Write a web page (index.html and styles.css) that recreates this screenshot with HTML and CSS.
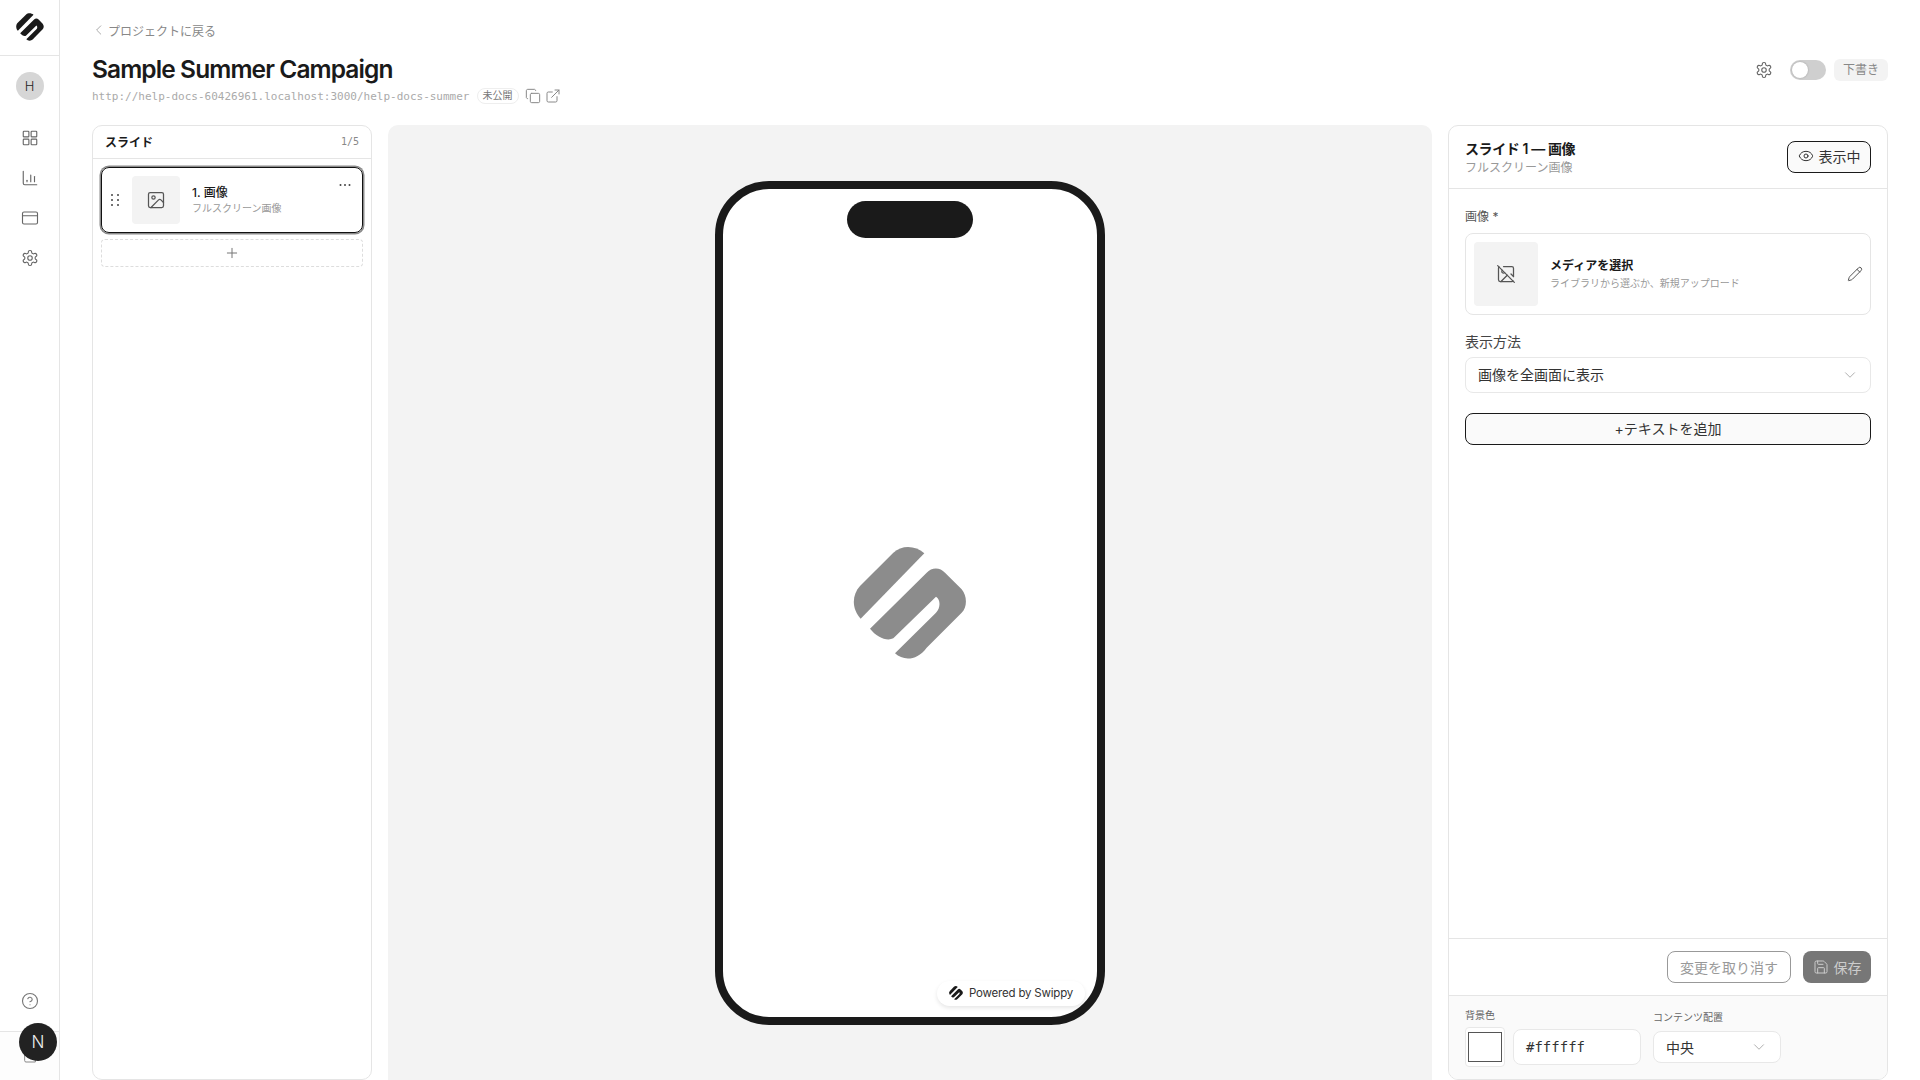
FILE: index.html
```html
<!DOCTYPE html>
<html lang="ja">
<head>
<meta charset="utf-8">
<title>Sample Summer Campaign</title>
<link rel="stylesheet" href="styles.css">
</head>
<body>
<svg class="sprite" aria-hidden="true">
  <symbol id="logo" viewBox="70 45 340 342"><path d="M283 67C255 42 215 42 190 65L90 165C65 192 65 235 92 263Z"/><path d="M120 293L290 125C305 108 330 108 345 125L395 175C412 195 412 228 395 245L290 350C260 390 220 390 195 367L318 245C332 232 332 205 318 197L190 322C170 332 140 318 120 293Z"/></symbol>
  <symbol id="grid" viewBox="0 0 24 24"><rect x="3" y="3" width="7.5" height="7.5" rx="1"/><rect x="13.5" y="3" width="7.5" height="7.5" rx="1"/><rect x="13.5" y="13.5" width="7.5" height="7.5" rx="1"/><rect x="3" y="13.5" width="7.5" height="7.5" rx="1"/></symbol>
  <symbol id="chart" viewBox="0 0 24 24"><path d="M3 3v16a2 2 0 0 0 2 2h16"/><path d="M8 17v-2"/><path d="M13 17V8"/><path d="M18 17v-7"/></symbol>
  <symbol id="card" viewBox="0 0 24 24"><rect x="2" y="4" width="20" height="16" rx="2"/><path d="M2 9h20"/></symbol>
  <symbol id="gear" viewBox="0 0 24 24"><path d="M12.22 2h-.44a2 2 0 0 0-2 2v.18a2 2 0 0 1-1 1.73l-.43.25a2 2 0 0 1-2 0l-.15-.08a2 2 0 0 0-2.73.73l-.22.38a2 2 0 0 0 .73 2.73l.15.1a2 2 0 0 1 1 1.72v.51a2 2 0 0 1-1 1.74l-.15.09a2 2 0 0 0-.73 2.73l.22.38a2 2 0 0 0 2.73.73l.15-.08a2 2 0 0 1 2 0l.43.25a2 2 0 0 1 1 1.73V20a2 2 0 0 0 2 2h.44a2 2 0 0 0 2-2v-.18a2 2 0 0 1 1-1.73l.43-.25a2 2 0 0 1 2 0l.15.08a2 2 0 0 0 2.73-.73l.22-.39a2 2 0 0 0-.73-2.73l-.15-.08a2 2 0 0 1-1-1.74v-.5a2 2 0 0 1 1-1.74l.15-.09a2 2 0 0 0 .73-2.73l-.22-.38a2 2 0 0 0-2.73-.73l-.15.08a2 2 0 0 1-2 0l-.43-.25a2 2 0 0 1-1-1.73V4a2 2 0 0 0-2-2z"/><circle cx="12" cy="12" r="3"/></symbol>
  <symbol id="help" viewBox="0 0 24 24"><circle cx="12" cy="12" r="10"/><path d="M9.09 9a3 3 0 0 1 5.83 1c0 2-3 3-3 3"/><path d="M12 17h.01"/></symbol>
  <symbol id="image" viewBox="0 0 24 24"><rect x="3" y="3" width="18" height="18" rx="2"/><circle cx="9" cy="9" r="2"/><path d="m21 15-3.086-3.086a2 2 0 0 0-2.828 0L6 21"/></symbol>
  <symbol id="image-off" viewBox="0 0 24 24"><path d="M2 2l20 20"/><path d="M10.41 10.41a2 2 0 1 1-2.83-2.83"/><path d="M13.5 13.5L6 21"/><path d="M18 12l3 3"/><path d="M3.59 3.59A1.99 1.99 0 0 0 3 5v14a2 2 0 0 0 2 2h14c.55 0 1.052-.22 1.41-.59"/><path d="M21 15V5a2 2 0 0 0-2-2H9"/></symbol>
  <symbol id="pencil" viewBox="0 0 24 24"><path d="M21.174 6.812a1 1 0 0 0-3.986-3.987L3.842 16.174a2 2 0 0 0-.5.83l-1.321 4.352a.5.5 0 0 0 .623.622l4.353-1.32a2 2 0 0 0 .83-.497z"/><path d="m15 5 4 4"/></symbol>
  <symbol id="eye" viewBox="0 0 24 24"><path d="M2.062 12.348a1 1 0 0 1 0-.696 10.75 10.75 0 0 1 19.876 0 1 1 0 0 1 0 .696 10.75 10.75 0 0 1-19.876 0"/><circle cx="12" cy="12" r="3"/></symbol>
  <symbol id="save" viewBox="0 0 24 24"><path d="M15.2 3a2 2 0 0 1 1.4.6l3.8 3.8a2 2 0 0 1 .6 1.4V19a2 2 0 0 1-2 2H5a2 2 0 0 1-2-2V5a2 2 0 0 1 2-2z"/><path d="M17 21v-7a1 1 0 0 0-1-1H8a1 1 0 0 0-1 1v7"/><path d="M7 3v4a1 1 0 0 0 1 1h7"/></symbol>
  <symbol id="copy" viewBox="0 0 24 24"><rect x="8" y="8" width="14" height="14" rx="2"/><path d="M4 16c-1.1 0-2-.9-2-2V4c0-1.1.9-2 2-2h10c1.1 0 2 .9 2 2"/></symbol>
  <symbol id="external" viewBox="0 0 24 24"><path d="M15 3h6v6"/><path d="M10 14 21 3"/><path d="M18 13v6a2 2 0 0 1-2 2H5a2 2 0 0 1-2-2V8a2 2 0 0 1 2-2h6"/></symbol>
  <symbol id="chev-left" viewBox="2.3 3.3 17.4 17.4"><path d="m15 18-6-6 6-6"/></symbol>
  <symbol id="chev-down" viewBox="0 0 24 24"><path d="m6 9 6 6 6-6"/></symbol>
  <symbol id="plus" viewBox="0 0 24 24"><path d="M5 12h14"/><path d="M12 5v14"/></symbol>
  <symbol id="logout" viewBox="0 0 24 24"><path d="M4 3v16a2 2 0 0 0 2 2h14v-8"/></symbol>
</svg>

<aside class="sidebar">
  <div class="side-logo"><svg class="logo-28"><use href="#logo"/></svg></div>
  <div class="side-nav">
    <div class="avatar">H</div>
    <nav class="nav-list">
      <span class="nav-item"><svg class="ic ic-18"><use href="#grid"/></svg></span>
      <span class="nav-item"><svg class="ic ic-18"><use href="#chart"/></svg></span>
      <span class="nav-item"><svg class="ic ic-18"><use href="#card"/></svg></span>
      <span class="nav-item"><svg class="ic ic-18"><use href="#gear"/></svg></span>
    </nav>
  </div>
  <div class="side-help"><svg class="ic ic-18"><use href="#help"/></svg></div>
  <div class="side-foot"><svg class="ic ic-16 foot-ic"><use href="#logout"/></svg></div>
</aside>

<main class="main">
  <header class="page-head">
    <div class="head-left">
      <a class="back"><svg class="ic ic-12 back-ic"><use href="#chev-left"/></svg><span>プロジェクトに戻る</span></a>
      <h1 class="title">Sample Summer Campaign</h1>
      <div class="url-row">
        <span class="url">http://help-docs-60426961.localhost:3000/help-docs-summer</span>
        <span class="pub-badge">未公開</span>
        <svg class="ic ic-16 url-ic"><use href="#copy"/></svg>
        <svg class="ic ic-16 url-ic url-ext"><use href="#external"/></svg>
      </div>
    </div>
    <div class="head-right">
      <svg class="ic ic-18 head-gear"><use href="#gear"/></svg>
      <span class="toggle"><span class="knob"></span></span>
      <span class="draft">下書き</span>
    </div>
  </header>

  <div class="columns">
    <section class="panel slides">
      <div class="slides-head"><strong>スライド</strong><span class="count">1/5</span></div>
      <div class="slides-list">
        <article class="slide-card">
          <svg class="grip" viewBox="0 0 16 16"><circle cx="5" cy="3" r="1"/><circle cx="11" cy="3" r="1"/><circle cx="5" cy="8" r="1"/><circle cx="11" cy="8" r="1"/><circle cx="5" cy="13" r="1"/><circle cx="11" cy="13" r="1"/></svg>
          <div class="slide-thumb"><svg class="ic ic-20 thumb-ic"><use href="#image"/></svg></div>
          <div class="slide-text"><div class="slide-name">1. 画像</div><div class="slide-sub">フルスクリーン画像</div></div>
          <svg class="more" viewBox="0 0 16 16"><circle cx="3.5" cy="8" r="1"/><circle cx="8" cy="8" r="1"/><circle cx="12.5" cy="8" r="1"/></svg>
        </article>
        <div class="add-slide"><svg class="ic ic-16"><use href="#plus"/></svg></div>
      </div>
    </section>

    <section class="preview">
      <div class="phone">
        <div class="notch"></div>
        <svg class="phone-logo"><use href="#logo"/></svg>
        <div class="powered"><svg class="logo-14"><use href="#logo"/></svg><span>Powered by Swippy</span></div>
      </div>
    </section>

    <section class="panel editor">
      <div class="ed-head">
        <div><div class="ed-title">スライド 1 — 画像</div><div class="ed-sub">フルスクリーン画像</div></div>
        <button class="btn-outline btn-view"><svg class="ic ic-16"><use href="#eye"/></svg><span>表示中</span></button>
      </div>
      <div class="ed-body">
        <div class="label-img">画像 *</div>
        <div class="media">
          <div class="media-thumb"><svg class="ic ic-20"><use href="#image-off"/></svg></div>
          <div class="media-text"><div class="media-title">メディアを選択</div><div class="media-sub">ライブラリから選ぶか、新規アップロード</div></div>
          <svg class="ic ic-16 media-edit"><use href="#pencil"/></svg>
        </div>
        <div class="label-mode">表示方法</div>
        <div class="select select-wide"><span class="select-text">画像を全画面に表示</span><svg class="ic ic-18 chev"><use href="#chev-down"/></svg></div>
        <button class="btn-outline btn-add">+テキストを追加</button>
      </div>
      <div class="ed-actions">
        <button class="btn-revert">変更を取り消す</button>
        <button class="btn-save"><svg class="ic ic-16"><use href="#save"/></svg><span>保存</span></button>
      </div>
      <div class="ed-bottom">
        <div class="field">
          <div class="mini-label">背景色</div>
          <div class="color-row">
            <div class="swatch"><span class="swatch-fill"></span></div>
            <div class="hex">#ffffff</div>
          </div>
        </div>
        <div class="field field-align">
          <div class="mini-label">コンテンツ配置</div>
          <div class="select select-small"><span>中央</span><svg class="ic ic-18 chev"><use href="#chev-down"/></svg></div>
        </div>
      </div>
    </section>
  </div>
</main>

<div class="dev-badge">N</div>
</body>
</html>
```

FILE: styles.css
```css
* { box-sizing: border-box; }
html, body { margin: 0; height: 100%; }
body {
  display: flex;
  height: 100vh;
  overflow: hidden;
  background: #fff;
  color: #1a1a1a;
  font-family: Inter, "Noto Sans CJK JP", sans-serif;
}
.sprite { display: none; }
button { font-family: inherit; cursor: pointer; }

.ic { fill: none; stroke: currentColor; stroke-width: 1.5; stroke-linecap: round; stroke-linejoin: round; flex: none; display: block; }
.ic-12 { width: 12px; height: 12px; }
.ic-16 { width: 16px; height: 16px; }
.ic-18 { width: 18px; height: 18px; }
.ic-20 { width: 20px; height: 20px; }

/* Sidebar */
.sidebar { width: 60px; flex: none; display: flex; flex-direction: column; border-right: 1px solid #e5e5e5; }
.side-logo { height: 56px; flex: none; display: flex; align-items: center; justify-content: center; border-bottom: 1px solid #e5e5e5; padding-bottom: 1px; }
.logo-28 { width: 28px; height: 28px; fill: #1a1a1a; }
.side-nav { padding-top: 16px; display: flex; flex-direction: column; align-items: center; }
.avatar { width: 28px; height: 28px; border-radius: 50%; background: #d6d6d6; display: flex; align-items: center; justify-content: center; font-size: 13px; font-weight: 300; color: #222; }
.nav-list { margin-top: 18px; display: flex; flex-direction: column; width: 100%; }
.nav-item { height: 40px; display: flex; align-items: center; justify-content: center; color: #666; }
.side-help { margin-top: auto; height: 60px; display: flex; align-items: center; justify-content: center; color: #777; }
.side-foot { height: 49px; flex: none; border-top: 1px solid #e5e5e5; background: #fdfdfd; display: flex; align-items: flex-end; justify-content: center; padding-bottom: 16px; }
.foot-ic { color: #888; }

/* Page */
.main { flex: 1; min-width: 0; padding: 0 32px; display: flex; flex-direction: column; }
.page-head { height: 125px; flex: none; display: flex; justify-content: space-between; align-items: flex-start; }
.head-left { padding-top: 20px; }
.back { display: flex; align-items: center; gap: 4px; height: 20px; font-size: 12px; color: #888; }
.back-ic { stroke-width: 1.2; color: #999; }
.title { margin: 11px 0 0; font-size: 24.5px; line-height: 36px; font-weight: 600; letter-spacing: -0.9px; color: #1a1a1a; white-space: nowrap; }
.url-row { display: flex; align-items: center; height: 18px; }
.url { font-family: "DejaVu Sans Mono", monospace; font-size: 11px; color: #aaa; }
.pub-badge { margin-left: 7px; height: 16px; padding: 0 5px; border: 1px solid #eee; border-radius: 8px; font-size: 10px; line-height: 13px; color: #777; }
.url-ic { color: #888; margin-left: 6px; }
.url-ext { margin-left: 4px; }
.head-right { margin-top: 59px; display: flex; align-items: center; height: 22px; color: #666; }
.head-gear { margin-right: 17px; }
.toggle { width: 36px; height: 20px; border-radius: 10px; background: #cfcfcf; display: flex; align-items: center; padding: 2px; margin-right: 8px; }
.knob { width: 16px; height: 16px; border-radius: 50%; background: #fff; box-shadow: 0 0 2px rgba(0,0,0,.25); }
.draft { width: 54px; height: 22px; border-radius: 6px; background: #f3f3f3; font-size: 12px; line-height: 21px; text-align: center; color: #888; }

.columns { flex: 1; min-height: 0; display: flex; gap: 16px; }
.panel { border: 1px solid #e5e5e5; border-radius: 10px; background: #fff; display: flex; flex-direction: column; overflow: hidden; }

/* Slide list */
.slides { width: 280px; flex: none; }
.slides-head { height: 33px; flex: none; padding: 0 12px 2px; border-bottom: 1px solid #e5e5e5; display: flex; align-items: center; justify-content: space-between; }
.slides-head strong { font-size: 12px; font-weight: 600; }
.count { font-family: "DejaVu Sans Mono", monospace; font-size: 10px; color: #888; }
.slides-list { padding: 8px; display: flex; flex-direction: column; gap: 6px; }
.slide-card { position: relative; height: 66px; border: 1px solid #111; border-radius: 8px; box-shadow: 0 0 0 1.5px #8a8a8a; padding: 8px 0 8px 5px; display: flex; align-items: center; }
.grip { width: 16px; height: 16px; fill: #444; flex: none; margin-right: 9px; }
.slide-thumb { width: 48px; height: 48px; border-radius: 4px; background: #f3f3f3; display: flex; align-items: center; justify-content: center; flex: none; margin-right: 12px; }
.thumb-ic { color: #555; }
.slide-name { font-size: 12px; line-height: 16px; font-weight: 500; color: #1a1a1a; }
.slide-sub { font-size: 10px; line-height: 14px; color: #999; }
.more { position: absolute; top: 9px; right: 9px; width: 16px; height: 16px; fill: #444; }
.add-slide { height: 28px; border: 1px dashed #ddd; border-radius: 4px; display: flex; align-items: center; justify-content: center; color: #777; }

/* Preview */
.preview { flex: 1; min-width: 0; border-radius: 10px 10px 0 0; background: #f3f3f3; display: flex; align-items: center; justify-content: center; }
.phone { position: relative; width: 390px; height: 844px; border: 8px solid #1a1a1a; border-radius: 54px; background: #fff; display: flex; align-items: center; justify-content: center; }
.notch { position: absolute; top: 12px; left: 50%; width: 126px; height: 37px; margin-left: -63px; border-radius: 19px; background: #1a1a1a; }
.phone-logo { width: 114px; height: 114px; fill: #8c8c8c; }
.powered { position: absolute; right: 12px; bottom: 11px; height: 25px; width: 148px; border-radius: 13px; background: #fff; box-shadow: 0 2px 4px rgba(0,0,0,.1); display: flex; align-items: center; gap: 6px; padding-left: 12px; font-size: 11.5px; letter-spacing: -0.2px; color: #333; white-space: nowrap; }
.logo-14 { width: 14px; height: 14px; fill: #1a1a1a; flex: none; }

/* Editor */
.editor { width: 440px; flex: none; }
.ed-head { height: 63px; flex: none; padding: 0 16px; border-bottom: 1px solid #e5e5e5; display: flex; align-items: center; justify-content: space-between; }
.ed-title { font-size: 14px; line-height: 20px; font-weight: 600; color: #1a1a1a; letter-spacing: -0.4px; }
.ed-sub { font-size: 12px; line-height: 16px; color: #999; margin-top: 1px; }
.btn-outline { border: 1px solid #1a1a1a; border-radius: 8px; background: #fafafa; height: 32px; font-size: 14px; color: #333; }
.btn-view { width: 84px; display: flex; align-items: center; justify-content: center; gap: 5px; padding: 0 0 2px; }
.ed-body { flex: 1; min-height: 0; padding: 20px 16px 0; }
.label-img { font-size: 12px; line-height: 16px; color: #555; }
.media { margin-top: 8px; height: 82px; border: 1px solid #e5e5e5; border-radius: 8px; padding: 8px; display: flex; align-items: center; }
.media-thumb { width: 64px; height: 64px; border-radius: 4px; background: #f3f3f3; display: flex; align-items: center; justify-content: center; flex: none; color: #555; }
.media-text { flex: 1; margin-left: 12px; }
.media-title { font-size: 12px; line-height: 16px; font-weight: 600; color: #1a1a1a; }
.media-sub { font-size: 10px; line-height: 14px; color: #999; margin-top: 2px; }
.media-edit { color: #555; margin-right: -1px; }
.label-mode { margin-top: 17px; font-size: 14px; line-height: 20px; color: #444; }
.select { border: 1px solid #e8e8e8; border-radius: 8px; display: flex; align-items: center; justify-content: space-between; font-size: 14px; color: #333; background: #fff; }
.select-wide { margin-top: 5px; height: 36px; padding: 0 11px 0 12px; }
.select-text { margin-top: -2px; }
.chev { color: #aaa; stroke-width: 1.25; }
.btn-add { margin-top: 20px; width: 100%; display: block; padding: 0 0 2px; }

.ed-actions { height: 57px; flex: none; border-top: 1px solid #e5e5e5; padding: 12px 16px 0; display: flex; justify-content: flex-end; gap: 12px; align-items: flex-start; }
.btn-revert { width: 124px; height: 32px; padding: 0 0 1px; border: 1px solid #999; border-radius: 8px; background: #fff; font-size: 14px; color: #999; }
.btn-save { width: 68px; height: 32px; padding: 0; border: none; border-radius: 8px; background: #777; color: #ccc; font-size: 14px; display: flex; align-items: center; justify-content: center; gap: 5px; }
.ed-bottom { flex: none; height: 84px; border-top: 1px solid #e5e5e5; background: #fafafa; padding: 13px 16px 0; display: flex; gap: 12px; align-items: flex-start; }
.mini-label { font-size: 10px; line-height: 12px; color: #666; }
.color-row { margin-top: 6px; display: flex; align-items: center; gap: 8px; }
.swatch { width: 40px; height: 40px; border: 1px solid #e8e8e8; border-radius: 4px; padding: 4px 2px; background: #fff; }
.swatch-fill { display: block; width: 100%; height: 100%; border: 1px solid #555; background: #fff; }
.hex { width: 128px; height: 36px; border: 1px solid #e8e8e8; border-radius: 8px; background: #fff; padding-left: 12px; font-family: "DejaVu Sans Mono", monospace; font-size: 14px; line-height: 35px; color: #333; }
.field-align { margin-top: 2px; }
.select-small { margin-top: 8px; width: 128px; height: 32px; padding: 0 12px; }

.dev-badge { position: fixed; left: 19px; top: 1023px; width: 38px; height: 38px; border-radius: 50%; background: #222; color: #eee; display: flex; align-items: center; justify-content: center; font-size: 17px; font-weight: 300; }
```
